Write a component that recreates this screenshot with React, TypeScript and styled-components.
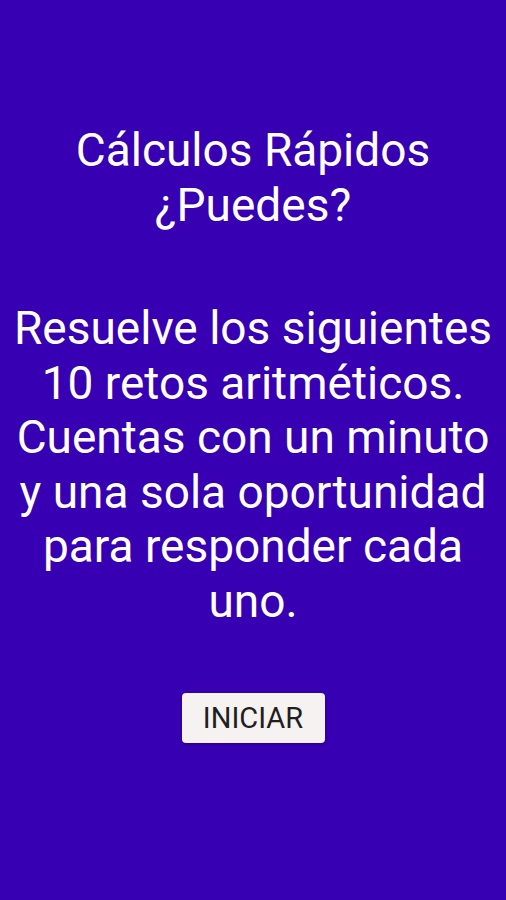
import * as React from "react";
import styled, { createGlobalStyle } from "styled-components";

const GlobalStyle = createGlobalStyle`
  html, body {
    margin: 0;
    padding: 0;
    background: #3700b3;
  }
`;

const Screen = styled.div`
  width: 506px;
  height: 900px;
  background: #3700b3;
  display: flex;
  flex-direction: column;
  align-items: center;
  padding-top: 123px;
  box-sizing: border-box;
  font-family: Roboto, "Liberation Sans", sans-serif;
  color: #ffffff;
`;

const Title = styled.h1`
  margin: 0;
  font-size: 46px;
  font-weight: 400;
  line-height: 55px;
  text-align: center;
`;

const Intro = styled.p`
  margin: 68px 0 0;
  font-size: 46px;
  line-height: 54.5px;
  text-align: center;
`;

const StartButton = styled.button`
  margin-top: 65px;
  width: 143px;
  height: 50px;
  border: none;
  border-radius: 4px;
  background: #f5f2f1;
  color: #1f1f1f;
  font-family: Roboto, "Liberation Sans", sans-serif;
  font-size: 29px;
  box-shadow: 0 1px 3px rgba(0, 0, 0, 0.3);
`;

export default function App() {
  return (
    <>
      <GlobalStyle />
      <Screen>
        <Title>
          Cálculos Rápidos
          <br />
          ¿Puedes?
        </Title>
        <Intro>
          Resuelve los siguientes
          <br />
          10 retos aritméticos.
          <br />
          Cuentas con un minuto
          <br />
          y una sola oportunidad
          <br />
          para responder cada
          <br />
          uno.
        </Intro>
        <StartButton>INICIAR</StartButton>
      </Screen>
    </>
  );
}
